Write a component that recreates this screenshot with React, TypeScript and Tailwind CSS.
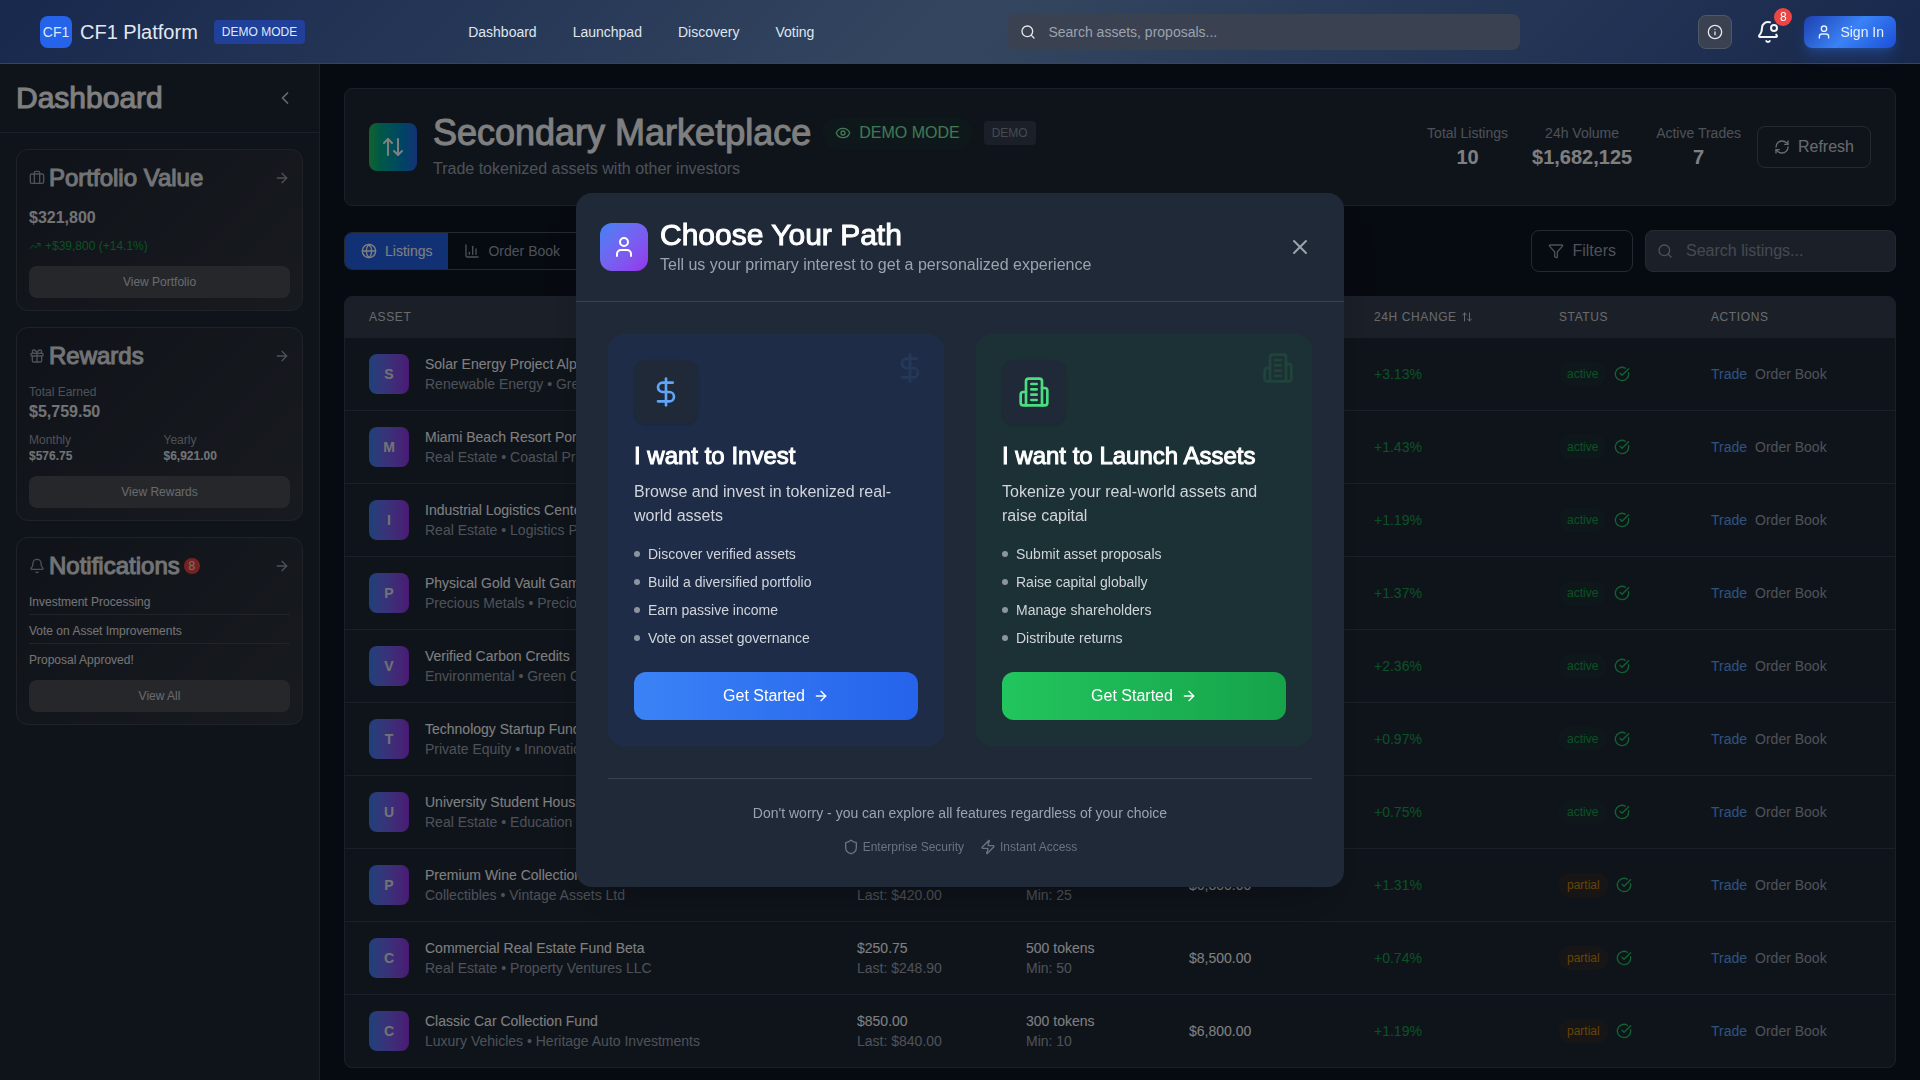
import type { ReactNode } from "react";
import {
  ArrowRight,
  ArrowUpDown,
  Bell,
  BellDot,
  Briefcase,
  ChartColumn,
  ChevronLeft,
  CircleCheckBig,
  DollarSign,
  Eye,
  Funnel,
  Gift,
  Globe,
  Info,
  RefreshCw,
  Search,
  Shield,
  TrendingUp,
  User,
  X,
  Zap,
} from "lucide-react";

type Listing = {
  name: string;
  detail: string;
  price?: string;
  last?: string;
  tokens?: string;
  min?: string;
  total?: string;
  change: string;
  status: "active" | "partial";
};

const listings: Listing[] = [
  { name: "Solar Energy Project Alpha", detail: "Renewable Energy • Green Power", change: "+3.13%", status: "active" },
  { name: "Miami Beach Resort Portfolio", detail: "Real Estate • Coastal Properties", change: "+1.43%", status: "active" },
  { name: "Industrial Logistics Center", detail: "Real Estate • Logistics Partners", change: "+1.19%", status: "active" },
  { name: "Physical Gold Vault Gamma", detail: "Precious Metals • Precious Vaults", change: "+1.37%", status: "active" },
  { name: "Verified Carbon Credits", detail: "Environmental • Green Credits", change: "+2.36%", status: "active" },
  { name: "Technology Startup Fund", detail: "Private Equity • Innovation Capital", change: "+0.97%", status: "active" },
  { name: "University Student Housing", detail: "Real Estate • Education Housing", change: "+0.75%", status: "active" },
  {
    name: "Premium Wine Collection",
    detail: "Collectibles • Vintage Assets Ltd",
    last: "$420.00",
    min: "25",
    total: "$6,300.00",
    change: "+1.31%",
    status: "partial",
  },
  {
    name: "Commercial Real Estate Fund Beta",
    detail: "Real Estate • Property Ventures LLC",
    price: "$250.75",
    last: "$248.90",
    tokens: "500 tokens",
    min: "50",
    total: "$8,500.00",
    change: "+0.74%",
    status: "partial",
  },
  {
    name: "Classic Car Collection Fund",
    detail: "Luxury Vehicles • Heritage Auto Investments",
    price: "$850.00",
    last: "$840.00",
    tokens: "300 tokens",
    min: "10",
    total: "$6,800.00",
    change: "+1.19%",
    status: "partial",
  },
];

const navItems = ["Dashboard", "Launchpad", "Discovery", "Voting"];
const notices = ["Investment Processing", "Vote on Asset Improvements", "Proposal Approved!"];

function BuildingIcon({ className }: { className?: string }) {
  return (
    <svg
      viewBox="0 0 24 24"
      fill="none"
      stroke="currentColor"
      strokeWidth="2"
      strokeLinecap="round"
      strokeLinejoin="round"
      aria-hidden="true"
      className={className}
    >
      <path d="M6 22V4a2 2 0 0 1 2-2h8a2 2 0 0 1 2 2v18Z" />
      <path d="M6 12H4a2 2 0 0 0-2 2v6a2 2 0 0 0 2 2h2" />
      <path d="M18 9h2a2 2 0 0 1 2 2v9a2 2 0 0 1-2 2h-2" />
      <path d="M10 6h4" />
      <path d="M10 10h4" />
      <path d="M10 14h4" />
      <path d="M10 18h4" />
    </svg>
  );
}

function TopBar() {
  return (
    <header className="relative z-20 flex h-16 items-center border-b border-[#3a4457] bg-linear-135 from-[#18284d] via-[#34465f] to-[#18284d] pr-6 pl-10">
      <div className="flex items-center gap-2">
        <span className="flex size-8 items-center justify-center rounded-lg bg-[#2563eb] text-sm font-medium text-[#dbeafe]">
          CF1
        </span>
        <span className="text-xl font-medium text-[#e2e8f0]">CF1 Platform</span>
        <span className="ml-2 rounded bg-[#21409a] px-2 py-1 text-xs text-[#dbeafe]">DEMO MODE</span>
      </div>
      <nav className="ml-[147px] flex gap-1" aria-label="Main">
        {navItems.map((item) => (
          <a key={item} href="#" className="px-4 py-2 text-sm text-[#dfe6f0]">
            {item}
          </a>
        ))}
      </nav>
      <div className="relative ml-auto w-full max-w-lg">
        <Search className="absolute top-1/2 left-3 size-4 -translate-y-1/2 text-[#e5e7eb]" />
        <input
          type="search"
          aria-label="Search assets and proposals"
          placeholder="Search assets, proposals..."
          className="h-9 w-full rounded-lg bg-[#3a4150] pr-3 pl-10 text-sm text-white placeholder:text-[#9ca3af]"
        />
      </div>
      <div className="ml-auto flex items-center gap-4">
        <button
          type="button"
          aria-label="Information"
          className="flex size-[34px] items-center justify-center rounded-lg border border-[#505868] bg-[#3a4150] text-[#e5e7eb]"
        >
          <Info className="size-4" />
        </button>
        <button type="button" aria-label="Notifications" className="relative p-2 text-[#f3f4f6]">
          <BellDot className="size-6" />
          <span className="absolute -top-1 -right-1 flex size-[18px] items-center justify-center rounded-full bg-[#ef4444] text-xs text-white">
            8
          </span>
        </button>
        <button
          type="button"
          className="flex h-8 items-center gap-2 rounded-lg bg-linear-135 from-[#1e40af] via-[#3b82f6] to-[#1d4ed8] px-3 text-sm font-medium text-[#e8effb] shadow-lg shadow-blue-500/25"
        >
          <User className="size-4" />
          Sign In
        </button>
      </div>
    </header>
  );
}

function Widget({
  icon,
  title,
  badge,
  action,
  children,
}: {
  icon: ReactNode;
  title: string;
  badge?: string;
  action: string;
  children: ReactNode;
}) {
  return (
    <section className="rounded-xl border border-[#3f4651] bg-linear-135 from-[#1f2632] to-[#30353f] p-3">
      <div className="mb-3 flex items-center gap-1">
        <span className="text-[#9ca3af]">{icon}</span>
        <h2 className="text-2xl text-[#e5e7eb] [-webkit-text-stroke:1px]">{title}</h2>
        {badge && (
          <span className="flex size-4 items-center justify-center rounded-full bg-[#ef4444] text-xs text-[#e5e7eb]">
            {badge}
          </span>
        )}
        <a href="#" aria-label={`Open ${title}`} className="ml-auto text-[#9ca3af]">
          <ArrowRight className="size-4" />
        </a>
      </div>
      {children}
      <button type="button" className="mt-3 h-8 w-full rounded-lg bg-[#4b4f57] text-xs text-[#d1d5db]">
        {action}
      </button>
    </section>
  );
}

function Sidebar() {
  return (
    <aside className="w-80 shrink-0 border-r border-[#374151] bg-[#1f2937]">
      <div className="flex items-center justify-between border-b border-[#374151] p-4">
        <h2 className="text-3xl text-white [-webkit-text-stroke:1px]">Dashboard</h2>
        <button type="button" aria-label="Collapse sidebar" className="p-2 text-[#d1d5db]">
          <ChevronLeft className="size-5" />
        </button>
      </div>
      <div className="flex flex-col gap-4 p-4">
        <Widget icon={<Briefcase className="size-4" />} title="Portfolio Value" action="View Portfolio">
          <p className="text-base font-bold text-[#e5e7eb]">$321,800</p>
          <p className="mt-2 flex items-center gap-1 text-xs text-[#16a34a]">
            <TrendingUp className="size-3" />
            +$39,800 (+14.1%)
          </p>
        </Widget>
        <Widget icon={<Gift className="size-4" />} title="Rewards" action="View Rewards">
          <p className="text-xs text-[#9ca3af]">Total Earned</p>
          <p className="text-base font-bold text-[#e5e7eb]">$5,759.50</p>
          <dl className="mt-2 grid grid-cols-2 gap-2 text-xs">
            <div>
              <dt className="text-[#9ca3af]">Monthly</dt>
              <dd className="font-bold text-[#e5e7eb]">$576.75</dd>
            </div>
            <div>
              <dt className="text-[#9ca3af]">Yearly</dt>
              <dd className="font-bold text-[#e5e7eb]">$6,921.00</dd>
            </div>
          </dl>
        </Widget>
        <Widget icon={<Bell className="size-4" />} title="Notifications" badge="8" action="View All">
          <ul className="flex flex-col gap-2 text-xs text-[#e5e7eb]">
            {notices.map((notice) => (
              <li key={notice} className="border-b border-[#414751] pb-1 last:border-0 last:pb-0">
                {notice}
              </li>
            ))}
          </ul>
        </Widget>
      </div>
    </aside>
  );
}

function Stat({ label, value }: { label: string; value: string }) {
  return (
    <div className="text-center">
      <p className="text-sm text-[#9ca3af]">{label}</p>
      <p className="text-xl font-bold text-white">{value}</p>
    </div>
  );
}

function PageHeader() {
  return (
    <section className="flex shrink-0 items-center justify-between rounded-lg border border-[#374151] bg-[#1f2937] p-6">
      <div className="flex items-center gap-4">
        <span className="flex size-12 items-center justify-center rounded-lg bg-linear-to-r from-[#22c55e] to-[#2563eb] text-white">
          <ArrowUpDown className="size-6" />
        </span>
        <div>
          <div className="flex items-center gap-3">
            <h1 className="text-4xl text-white [-webkit-text-stroke:1px]">Secondary Marketplace</h1>
            <span className="flex items-center gap-2 rounded-full bg-[#14532d]/20 px-3 py-1 text-base text-[#86efac]">
              <Eye className="size-4" />
              DEMO MODE
            </span>
            <span className="rounded bg-[#374151] px-2 py-1 text-xs text-[#8b93a0]">DEMO</span>
          </div>
          <p className="mt-1 text-base text-[#9ca3af]">Trade tokenized assets with other investors</p>
        </div>
      </div>
      <div className="flex items-center gap-4">
        <div className="flex gap-6">
          <Stat label="Total Listings" value="10" />
          <Stat label="24h Volume" value="$1,682,125" />
          <Stat label="Active Trades" value="7" />
        </div>
        <button
          type="button"
          className="flex items-center gap-2 rounded-lg border border-[#4b5563] px-4 py-2 text-base text-[#d1d5db]"
        >
          <RefreshCw className="size-4" />
          Refresh
        </button>
      </div>
    </section>
  );
}

function Toolbar() {
  return (
    <div className="flex shrink-0 items-center justify-between">
      <div className="flex overflow-hidden rounded-lg border border-[#4b5563] pr-4 text-sm">
        <button type="button" className="flex items-center gap-2 bg-[#2563eb] px-4 py-2 text-white">
          <Globe className="size-4" />
          Listings
        </button>
        <button type="button" className="flex items-center gap-2 px-4 py-2 text-[#9ca3af]">
          <ChartColumn className="size-4" />
          Order Book
        </button>
      </div>
      <div className="flex gap-3">
        <button
          type="button"
          className="flex items-center gap-2 rounded-lg border border-[#4b5563] px-4 py-2 text-base text-[#9ca3af]"
        >
          <Funnel className="size-4" />
          Filters
        </button>
        <div className="relative">
          <Search className="absolute top-1/2 left-3 size-4 -translate-y-1/2 text-[#9ca3af]" />
          <input
            type="search"
            aria-label="Search listings"
            placeholder="Search listings..."
            className="w-[251px] rounded-lg border border-[#4b5563] bg-[#374151] py-2 pr-4 pl-10 text-base text-white placeholder:text-[#8b93a0]"
          />
        </div>
      </div>
    </div>
  );
}

function StatusPill({ status }: { status: Listing["status"] }) {
  return status === "active" ? (
    <span className="rounded-full bg-[#14532d]/20 px-2 py-1 text-xs font-medium text-[#16a34a]">active</span>
  ) : (
    <span className="rounded-full bg-[#78350f]/20 px-2 py-1 text-xs font-medium text-[#ca8a04]">partial</span>
  );
}

function ListingsTable() {
  return (
    <div className="shrink-0 overflow-hidden rounded-lg border border-[#374151] bg-[#1f2937]">
      <table className="w-full table-fixed text-left text-sm">
        <colgroup>
          <col />
          <col className="w-[169px]" />
          <col className="w-[163px]" />
          <col className="w-[185px]" />
          <col className="w-[185px]" />
          <col className="w-[152px]" />
          <col className="w-[208px]" />
        </colgroup>
        <thead className="bg-[#374151] text-xs tracking-wider text-[#d1d5db] uppercase">
          <tr className="border-b border-[#374151]">
            <th className="px-6 py-3 font-normal">Asset</th>
            <th className="px-6 py-3 font-normal">Price</th>
            <th className="px-6 py-3 font-normal">Amount</th>
            <th className="px-6 py-3 font-normal">Total</th>
            <th className="px-6 py-3 font-normal">
              <span className="flex items-center gap-1">
                24h Change
                <ArrowUpDown className="size-3" />
              </span>
            </th>
            <th className="px-6 py-3 font-normal">Status</th>
            <th className="px-6 py-3 font-normal">Actions</th>
          </tr>
        </thead>
        <tbody>
          {listings.map((item) => (
            <tr key={item.name} className="border-b border-[#374151] whitespace-nowrap last:border-0">
              <td className="px-6 py-4">
                <div className="flex items-center gap-4">
                  <span className="flex size-10 shrink-0 items-center justify-center rounded-lg bg-linear-to-r from-[#3b82f6] to-[#9333ea] font-bold text-[#e5e7eb]">
                    {item.name[0]}
                  </span>
                  <div>
                    <p className="text-white">{item.name}</p>
                    <p className="text-[#9ca3af]">{item.detail}</p>
                  </div>
                </div>
              </td>
              <td className="px-6">
                <p className="min-h-5 text-white">{item.price}</p>
                <p className="min-h-5 text-[#9ca3af]">{item.last && `Last: ${item.last}`}</p>
              </td>
              <td className="px-6">
                <p className="min-h-5 text-white">{item.tokens}</p>
                <p className="min-h-5 text-[#9ca3af]">{item.min && `Min: ${item.min}`}</p>
              </td>
              <td className="px-6 text-white">{item.total}</td>
              <td className="px-6 text-[#16a34a]">{item.change}</td>
              <td className="px-6">
                <span className="flex items-center gap-2">
                  <StatusPill status={item.status} />
                  <CircleCheckBig className="size-4 text-[#22c55e]" />
                </span>
              </td>
              <td className="px-6">
                <span className="flex gap-2">
                  <button type="button" className="text-[#60a5fa]">
                    Trade
                  </button>
                  <button type="button" className="text-[#9ca3af]">
                    Order Book
                  </button>
                </span>
              </td>
            </tr>
          ))}
        </tbody>
      </table>
    </div>
  );
}

function PathCard({
  cardClass,
  iconClass,
  buttonClass,
  icon,
  watermark,
  title,
  text,
  points,
}: {
  cardClass: string;
  iconClass: string;
  buttonClass: string;
  icon: ReactNode;
  watermark: ReactNode;
  title: string;
  text: string;
  points: string[];
}) {
  return (
    <article className={`relative rounded-2xl border-2 border-transparent p-6 ${cardClass}`}>
      <span className={`absolute top-4 right-4 opacity-10 ${iconClass}`}>{watermark}</span>
      <span className={`flex size-16 items-center justify-center rounded-xl bg-[#1f2937] shadow-sm ${iconClass}`}>
        {icon}
      </span>
      <h3 className="mt-4 text-2xl text-white [-webkit-text-stroke:1px]">{title}</h3>
      <p className="mt-2 text-base text-[#d1d5db]">{text}</p>
      <ul className="mt-4 flex flex-col gap-2 text-sm text-[#d1d5db]">
        {points.map((point) => (
          <li key={point} className="flex items-center gap-2">
            <span className="size-1.5 rounded-full bg-[#8b949f]" />
            {point}
          </li>
        ))}
      </ul>
      <button
        type="button"
        className={`mt-6 flex h-12 w-full items-center justify-center gap-2 rounded-xl text-base font-medium text-white ${buttonClass}`}
      >
        Get Started
        <ArrowRight className="size-4" />
      </button>
    </article>
  );
}

function PathDialog() {
  return (
    <div className="fixed inset-0 z-10 flex items-center justify-center bg-black/50">
      <div
        role="dialog"
        aria-modal="true"
        aria-labelledby="path-title"
        className="w-full max-w-3xl rounded-2xl bg-[#1f2937] shadow-2xl"
      >
        <div className="flex items-center gap-3 border-b border-[#374151] p-6">
          <span className="flex size-12 items-center justify-center rounded-xl bg-linear-to-br from-[#3b82f6] to-[#9333ea] text-white">
            <User className="size-6" />
          </span>
          <div>
            <h2 id="path-title" className="text-3xl text-white [-webkit-text-stroke:1px]">
              Choose Your Path
            </h2>
            <p className="text-base text-[#9ca3af]">Tell us your primary interest to get a personalized experience</p>
          </div>
          <button type="button" aria-label="Close" className="ml-auto p-2 text-[#9ca3af]">
            <X className="size-6" />
          </button>
        </div>
        <div className="p-8">
          <div className="grid grid-cols-2 gap-8">
            <PathCard
              cardClass="bg-[#1e3a8a]/20"
              iconClass="text-[#60a5fa]"
              buttonClass="bg-linear-to-r from-[#3b82f6] to-[#2563eb]"
              icon={<DollarSign className="size-8" />}
              watermark={<DollarSign className="size-8" />}
              title="I want to Invest"
              text="Browse and invest in tokenized real-world assets"
              points={[
                "Discover verified assets",
                "Build a diversified portfolio",
                "Earn passive income",
                "Vote on asset governance",
              ]}
            />
            <PathCard
              cardClass="bg-[#14532d]/20"
              iconClass="text-[#4ade80]"
              buttonClass="bg-linear-to-r from-[#22c55e] to-[#16a34a]"
              icon={<BuildingIcon className="size-8" />}
              watermark={<BuildingIcon className="size-8" />}
              title="I want to Launch Assets"
              text="Tokenize your real-world assets and raise capital"
              points={[
                "Submit asset proposals",
                "Raise capital globally",
                "Manage shareholders",
                "Distribute returns",
              ]}
            />
          </div>
          <div className="mt-8 flex flex-col items-center gap-4 border-t border-[#374151] pt-6">
            <p className="text-sm text-[#9ca3af]">
              Don't worry - you can explore all features regardless of your choice
            </p>
            <div className="flex gap-4 text-xs text-[#6b7280]">
              <span className="flex items-center gap-1">
                <Shield className="size-4" />
                Enterprise Security
              </span>
              <span className="flex items-center gap-1">
                <Zap className="size-4" />
                Instant Access
              </span>
            </div>
          </div>
        </div>
      </div>
    </div>
  );
}

export default function App() {
  return (
    <div className="flex h-screen flex-col overflow-hidden bg-[#0d1422] font-['Liberation_Sans',sans-serif]">
      <TopBar />
      <div className="flex min-h-0 flex-1">
        <Sidebar />
        <main className="flex min-w-0 flex-1 flex-col gap-6 p-6">
          <PageHeader />
          <Toolbar />
          <ListingsTable />
        </main>
      </div>
      <PathDialog />
    </div>
  );
}
